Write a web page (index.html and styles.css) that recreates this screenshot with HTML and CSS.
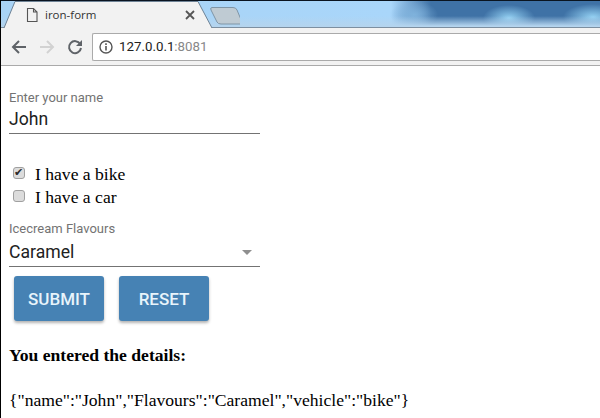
FILE: index.html
```html
<!DOCTYPE html>
<html lang="en">
<head>
    <meta charset="UTF-8">
    <meta name="viewport" content="width=device-width, initial-scale=1.0">
    <title>iron-form</title>
    <link rel="stylesheet" href="styles.css">
</head>
<body>
    <div class="browser">
        <div class="tabstrip">
            <svg class="tab-shape" width="240" height="28" viewBox="0 0 240 28">
                <path d="M4 28 L15 2 H198 L212 28 Z" fill="#f2f2f2"/>
                <path d="M4 28 L15 1.500 H198 L212 28" fill="none" stroke="#6f8396" stroke-width="1"/>
                <path d="M212 7.500 H233 Q236 7.500 237 10 L242 22 Q243 24 240 24 H221 Q218 24 217 22 L211 10 Q210 7.500 212 7.500 Z" fill="#bfcbd3" stroke="#7f95a6"/>
            </svg>
            <div class="tab">
                <svg class="tab-icon" width="14" height="16" viewBox="0 0 14 16">
                    <path d="M2.500 1.500 H8.500 L12 5 V14.500 H2.500 Z M8.500 1.500 V5 H12" fill="none" stroke="#555" stroke-width="1.100"/>
                </svg>
                <span class="tab-title">iron-form</span>
                <svg class="tab-close" width="10" height="10" viewBox="0 0 10 10">
                    <path d="M1 1 L9 9 M9 1 L1 9" stroke="#555" stroke-width="1.800"/>
                </svg>
            </div>
        </div>
        <div class="toolbar">
            <svg class="nav-icon" width="16" height="14" viewBox="0 0 16 14">
                <path d="M15 7 H2.500 M8 1 L2 7 L8 13" fill="none" stroke="#5f6368" stroke-width="2"/>
            </svg>
            <svg class="nav-icon" width="16" height="14" viewBox="0 0 16 14">
                <path d="M1 7 H13.500 M8 1 L14 7 L8 13" fill="none" stroke="#d2d2d2" stroke-width="2"/>
            </svg>
            <svg class="nav-icon" width="16" height="16" viewBox="0 0 16 16">
                <path d="M13.200 5 A6 6 0 1 0 14 9" fill="none" stroke="#5f6368" stroke-width="2"/>
                <path d="M15 1 V7 H9 Z" fill="#5f6368"/>
            </svg>
            <div class="omnibox">
                <svg width="14" height="14" viewBox="0 0 14 14">
                    <circle cx="7" cy="7" r="6" fill="none" stroke="#555" stroke-width="1.400"/>
                    <path d="M7 6 V10.500 M7 3.300 V5" stroke="#555" stroke-width="1.600"/>
                </svg>
                <span class="url">127.0.0.1<span class="url-port">:8081</span></span>
            </div>
        </div>
    </div>

    <form class="demo-form">
        <div class="field">
            <label class="field-label">Enter your name</label>
            <div class="field-value">John</div>
        </div>

        <div class="checks">
            <label class="check"><input type="checkbox" checked> I have a bike</label>
            <label class="check"><input type="checkbox"> I have a car</label>
        </div>

        <div class="field field-select">
            <label class="field-label">Icecream Flavours</label>
            <div class="field-value">
                Caramel
                <span class="caret"></span>
            </div>
        </div>

        <div class="buttons">
            <button type="button" class="btn">SUBMIT</button>
            <button type="button" class="btn">RESET</button>
        </div>
    </form>

    <div class="result">
        <h4>You entered the details:</h4>
        <p>{"name":"John","Flavours":"Caramel","vehicle":"bike"}</p>
    </div>
</body>
</html>
```

FILE: styles.css
```css
body {
    margin: 0;
    background-color: #fff;
    color: #000;
    font-family: 'Liberation Serif', serif;
    height: 418px;
    overflow: hidden;
    border-left: 1px solid #000;
    box-sizing: border-box;
}

.browser {
    border-top: 1px solid #0a1420;
    border-bottom: 1px solid #aaa;
}

.tabstrip {
    position: relative;
    height: 27px;
    background:
        linear-gradient(to bottom, rgba(190, 222, 245, 0) 0, rgba(190, 222, 245, 0) 15px, #b4d4ee 25px),
        radial-gradient(ellipse 24px 14px at 413px 14px, #7fb2dc 0%, rgba(127, 178, 220, 0) 100%),
        radial-gradient(ellipse 26px 13px at 508px 17px, #93d0f2 0%, rgba(147, 208, 242, 0) 100%),
        radial-gradient(ellipse 30px 13px at 592px 16px, #93d0f2 0%, rgba(147, 208, 242, 0) 100%),
        linear-gradient(to right, #a9d3f5 0, #a9d6fa 390px, #3f72a6 430px, #3f72a6 600px);
    border-bottom: 1px solid #7d8fa0;
    box-sizing: border-box;
    font-family: 'Liberation Sans', sans-serif;
}

.tab-shape {
    position: absolute;
    left: -1px;
    top: -1px;
}

.tab {
    position: relative;
    display: flex;
    align-items: center;
    height: 27px;
    padding-left: 24px;
    width: 170px;
}

.tab-title {
    margin-left: 6px;
    font-family: 'Open Sans', sans-serif;
    font-size: 11.500px;
    color: #333;
}

.tab-close {
    margin-left: auto;
}

.toolbar {
    display: flex;
    align-items: center;
    height: 37px;
    padding-left: 10px;
    background-color: #f2f2f2;
    box-sizing: border-box;
    gap: 12px;
}

.nav-icon {
    flex: none;
}

.omnibox {
    display: flex;
    align-items: center;
    gap: 6px;
    flex: 1;
    height: 28px;
    margin-left: -3px;
    padding-left: 6px;
    background-color: #fff;
    border: 1px solid #aaa;
    border-right: none;
    border-radius: 2px 0 0 2px;
    box-sizing: border-box;
}

.url {
    font-family: 'Roboto', sans-serif;
    font-size: 13.300px;
    color: #222;
}

.url-port {
    color: #888;
}

.demo-form {
    padding: 24px 0 0 8px;
    font-family: 'Roboto', sans-serif;
}

.field {
    width: 251px;
    border-bottom: 1px solid #737373;
}

.field-label {
    display: block;
    font-size: 13px;
    line-height: 15px;
    color: #737373;
}

.field-value {
    position: relative;
    font-size: 17.600px;
    line-height: 21px;
    padding-top: 4px;
    padding-bottom: 3px;
    color: #212121;
}

.checks {
    margin-top: 29px;
    font-family: 'Liberation Serif', serif;
    font-size: 17.600px;
}

.check {
    display: flex;
    align-items: center;
    height: 23px;
    gap: 5px;
}

.check input {
    appearance: none;
    position: relative;
    width: 12px;
    height: 12px;
    margin: 0 5px 3px 4px;
    background-color: #dcdcdc;
    border: 1px solid #a0a0a0;
    border-radius: 3px;
}

.check input:checked::after {
    content: "\2714";
    position: absolute;
    left: 0;
    top: -1px;
    font-family: 'DejaVu Sans', sans-serif;
    font-size: 11px;
    line-height: 12px;
    color: #2b2b2b;
}

.field-select {
    margin-top: 12px;
}

.field-select .field-value {
    padding-top: 6px;
}

.caret {
    position: absolute;
    right: 8px;
    top: 14px;
    border-left: 5px solid transparent;
    border-right: 5px solid transparent;
    border-top: 5px solid #8f8f8f;
}

.buttons {
    display: flex;
    gap: 15px;
    margin-top: 9px;
    padding-left: 5px;
}

.btn {
    width: 90px;
    height: 45px;
    padding: 0;
    background-color: #4682b4;
    color: #e8f4fb;
    border: none;
    border-radius: 3px;
    box-shadow: 0 2px 3px rgba(0, 0, 0, 0.3);
    font-family: 'Roboto', sans-serif;
    font-size: 17px;
    font-weight: 500;
}

.result {
    padding-left: 8px;
}

.result h4 {
    margin: 24px 0 0;
    font-size: 17.600px;
    line-height: 20px;
}

.result p {
    margin: 25px 0 0;
    font-size: 17.600px;
    line-height: 20px;
}
```
